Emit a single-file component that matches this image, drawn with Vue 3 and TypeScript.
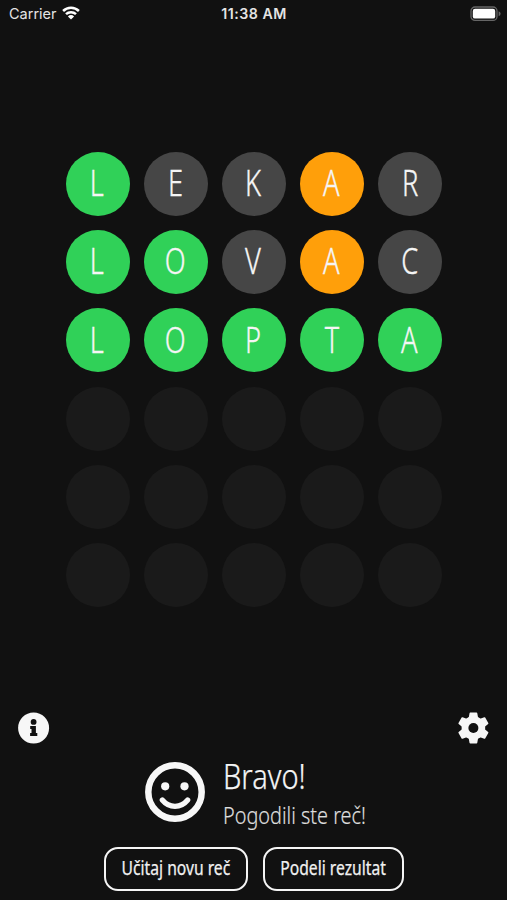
<script setup lang="ts">
type State = 'hit' | 'near' | 'miss' | 'empty'
interface Tile { letter: string; state: State }

const guesses: [string, string][] = [
  ['LEKAR', 'hmmnm'],
  ['LOVAC', 'hhmnm'],
  ['LOPTA', 'hhhhh'],
]
const states: Record<string, State> = { h: 'hit', n: 'near', m: 'miss' }

const rows: Tile[][] = Array.from({ length: 6 }, (_, r) =>
  Array.from({ length: 5 }, (_, c) => {
    const guess = guesses[r]
    return guess
      ? { letter: guess[0][c], state: states[guess[1][c]] }
      : { letter: '', state: 'empty' as State }
  }),
)
</script>

<template>
  <main class="screen">
    <header class="status">
      <div class="carrier">
        <span>Carrier</span>
        <svg class="wifi" viewBox="0 0 18 14" width="18" height="14">
          <path d="M1.1 5a11.2 11.2 0 0 1 15.8 0" />
          <path d="M4 8.2a7.2 7.2 0 0 1 10 0" />
          <path class="dot" d="M9 13.6 5.9 10.5a4.5 4.5 0 0 1 6.2 0z" />
        </svg>
      </div>
      <div class="time">11:38 AM</div>
      <svg class="battery" viewBox="0 0 31 16" width="31" height="16">
        <rect x="1" y="1" width="26" height="13.4" rx="4" fill="#111" stroke="#666" stroke-width="1.3" />
        <rect x="2.8" y="2.8" width="22.4" height="9.8" rx="2.2" fill="#fff" />
        <path d="M28.6 5.2q2 .8 2 2.5t-2 2.5z" fill="#666" />
      </svg>
    </header>

    <section class="board">
      <div v-for="(row, r) in rows" :key="r" class="row">
        <div v-for="(tile, c) in row" :key="c" class="tile" :class="tile.state">
          <span>{{ tile.letter }}</span>
        </div>
      </div>
    </section>

    <nav class="tools">
      <svg viewBox="0 0 32 32" width="32" height="32">
        <circle cx="15.6" cy="16" r="15.5" fill="#f7f7f7" />
        <circle cx="15.6" cy="9.9" r="2.9" fill="#111" />
        <path d="M12.2 14h5.7v6.9h1.4v3.2h-7.2v-3.2h1.4v-3.8h-1.3z" fill="#111" />
      </svg>
      <svg viewBox="0 0 32 32" width="32" height="32">
        <g fill="#f7f7f7" stroke="#f7f7f7" stroke-width="1.6" stroke-linejoin="round">
          <circle cx="16.4" cy="16" r="11" />
          <path v-for="a in [0, 60, 120, 180, 240, 300]" :key="a" d="M13.3 1.4h6.2l.9 5h-8z" :transform="`rotate(${a} 16.4 16)`" />
        </g>
        <circle cx="16.4" cy="16" r="5" fill="#111" />
      </svg>
    </nav>

    <section class="result">
      <svg viewBox="0 0 60 60" width="60" height="60">
        <circle cx="30" cy="30" r="26.7" fill="none" stroke="#f7f7f7" stroke-width="6.5" />
        <circle cx="20.2" cy="24.3" r="4.1" fill="#f7f7f7" />
        <circle cx="39.5" cy="24.3" r="4.1" fill="#f7f7f7" />
        <path d="M17.3 38q5.2 6.3 12.7 6.3t12.7-6.3" fill="none" stroke="#f7f7f7" stroke-width="5.2" stroke-linecap="round" />
      </svg>
      <div class="message">
        <h1><span>Bravo!</span></h1>
        <p><span>Pogodili ste reč!</span></p>
      </div>
    </section>

    <footer class="actions">
      <button class="load"><span>Učitaj novu reč</span></button>
      <button class="share"><span>Podeli rezultat</span></button>
    </footer>
  </main>
</template>

<style>
body { margin: 0; background: #111; }
</style>

<style scoped>
.screen {
  box-sizing: border-box;
  width: 507px;
  height: 900px;
  overflow: hidden;
  display: flex;
  flex-direction: column;
  background: #111;
  color: #f5f5f5;
  font-family: "Noto Sans", "Open Sans", sans-serif;
}
.status {
  display: grid;
  grid-template-columns: 1fr auto 1fr;
  align-items: center;
  height: 28px;
  padding: 0 6px 0 9px;
  font-family: Inter, sans-serif;
  font-size: 14.5px;
  color: #e4e4e4;
}
.carrier { display: flex; align-items: center; gap: 5px; margin-top: -1px; }
.wifi { fill: none; stroke: #fff; stroke-width: 2.5; margin-top: -1px; }
.wifi .dot { fill: #fff; stroke: none; }
.time { font-weight: 600; font-size: 14.2px; letter-spacing: 0.5px; margin-right: 2px; margin-top: -1px; }
.battery { justify-self: end; margin-top: -1px; }
.board {
  display: flex;
  flex-direction: column;
  align-items: center;
  gap: 14.2px;
  margin: 124.1px 0 0 0.8px;
}
.row { display: flex; gap: 14.2px; }
.tile {
  width: 64px;
  height: 64px;
  border-radius: 50%;
  display: flex;
  align-items: center;
  justify-content: center;
  font-size: 35.8px;
  font-weight: 300;
  line-height: 1;
}
.tile span, .message span, button span { display: inline-block; }
.tile span { transform: translate(-0.5px, -0.6px) scaleX(0.76); -webkit-text-stroke: 0.35px currentColor; }
.hit { background: #30d158; }
.near { background: #ff9f0a; }
.miss { background: #464646; }
.empty { background: #1a1a1a; }
.tools {
  display: flex;
  justify-content: space-between;
  margin-top: 104.9px;
  padding: 0 18px;
}
.result { display: flex; gap: 18px; padding-left: 145px; margin-top: 12px; height: 80px; }
.result svg { margin-top: 6px; }
.message { white-space: nowrap; }
.message span { transform-origin: left; }
h1, p { margin: 0; font-weight: 300; }
h1 { font-size: 35px; line-height: 40px; -webkit-text-stroke: 0.25px currentColor; }
h1 span { transform: scaleX(0.83); }
p { font-size: 23.5px; line-height: 38px; color: #ddd; -webkit-text-stroke: 0.2px currentColor; }
p span { transform: scaleX(0.845); }
.actions { display: flex; gap: 15px; margin-top: 11px; padding-left: 104px; }
button {
  box-sizing: border-box;
  display: flex;
  align-items: center;
  justify-content: center;
  height: 44px;
  padding: 0 0 2px;
  border: 2.5px solid #f5f5f5;
  border-radius: 14px;
  background: none;
  color: #f0f0f0;
  font: inherit;
  font-size: 19px;
  white-space: nowrap;
}
button span { transform: scaleX(0.825); -webkit-text-stroke: 0.25px currentColor; }
.load { width: 144px; }
.share { width: 141px; }
</style>
